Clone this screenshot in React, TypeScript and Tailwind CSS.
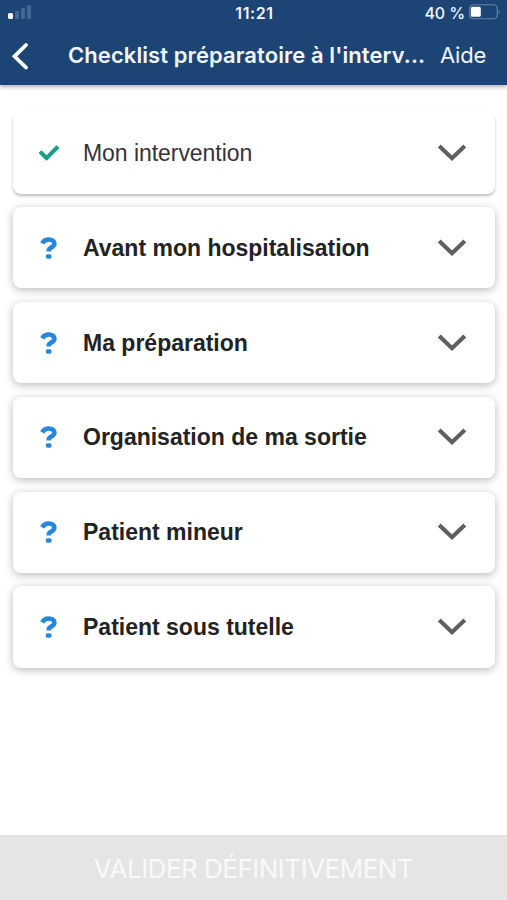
import { FaCheck } from 'react-icons/fa';

interface Section {
  title: string;
  done: boolean;
}

const sections: Section[] = [
  { title: 'Mon intervention', done: true },
  { title: 'Avant mon hospitalisation', done: false },
  { title: 'Ma préparation', done: false },
  { title: 'Organisation de ma sortie', done: false },
  { title: 'Patient mineur', done: false },
  { title: 'Patient sous tutelle', done: false },
];

function StatusBar() {
  return (
    <div className="grid grid-cols-3 items-center h-[25px] pl-2 pr-[6px]">
      <svg width="24" height="15" viewBox="0 0 24 15" fill="#416892" className="-mt-[2px]">
        <rect x="0" y="9" width="5" height="6" rx="1.5" fill="#fff" />
        <rect x="7" y="7" width="4" height="8" rx="1" />
        <rect x="13" y="4" width="4" height="11" rx="1" />
        <rect x="19" y="1" width="4" height="14" rx="1" />
      </svg>
      <span className="text-center text-[16px] font-semibold tracking-[0.6px]">11:21</span>
      <div className="flex items-center justify-end gap-[4px]">
        <span className="text-[16px] font-medium whitespace-nowrap tracking-[-0.1px]">40 %</span>
        <svg width="32" height="16" viewBox="0 0 32 16" fill="none" className="-mt-[2px]">
          <rect x="0.25" y="0.75" width="28" height="14" rx="4" stroke="#6484a8" strokeWidth="1.2" />
          <rect x="1.800" y="2.8" width="10" height="10" rx="1.5" fill="#fff" />
          <path d="M29.700 5.500c1.300.7 1.300 3.800 0 4.500z" fill="#6484a8" />
        </svg>
      </div>
    </div>
  );
}

function QuestionMark() {
  return (
    <svg width="18" height="24" viewBox="0 0 18 24" fill="none">
      <path
        d="M2.200 7.400C3.600 4.800 5.800 3.500 8.600 3.500c3.500 0 5.800 1.700 5.800 4.300 0 3.900-5.700 3.200-5.700 6.900v.9"
        stroke="#2588de"
        strokeWidth="4.600"
      />
      <rect x="5.800" y="18.300" width="5.800" height="4.400" rx="1.700" fill="#2588de" />
    </svg>
  );
}

function SectionCard({ title, done }: Section) {
  return (
    <button
      className={
        done
          ? 'flex items-center w-full h-[81.500px] rounded-[8px] bg-white pr-[28px] text-left shadow-[0_2px_3px_rgba(0,0,0,0.26)]'
          : 'flex items-center w-full h-[81.500px] rounded-[8px] bg-white pr-[28px] text-left shadow-[0_2px_8px_rgba(0,0,0,0.28)]'
      }
    >
      <span className="flex justify-center w-[70px] pl-[2px]">
        {done ? <FaCheck size={20} color="#16a085" /> : <QuestionMark />}
      </span>
      <span
        className={
          done
            ? 'flex-1 pt-[1px] text-[23px] leading-none tracking-[-0.05px] text-[#333436]'
            : 'flex-1 pt-[1px] text-[23px] leading-none font-bold text-[#222324]'
        }
      >
        {title}
      </span>
      <svg width="30" height="20" viewBox="0 0 30 20" fill="none" stroke="#5e5f60" strokeWidth="4.200">
        <path d="M2.200 3 15 15.200 27.800 3" />
      </svg>
    </button>
  );
}

export default function App() {
  return (
    <div className="flex flex-col w-full h-[900px] bg-white overflow-hidden font-['Liberation_Sans',Arial,sans-serif]">
      <header className="shrink-0 h-[85px] bg-[#1c4474] text-[#f1f6fc] shadow-[0_2px_4px_rgba(0,0,0,0.3)] font-['Inter',sans-serif]">
        <StatusBar />
        <div className="flex items-center h-[61px] pl-3">
          <svg width="18" height="28" viewBox="0 0 18 28" fill="none" stroke="#fff" strokeWidth="3.800" strokeLinecap="round">
            <path d="M14 3 2.500 14.300 14 25.500" />
          </svg>
          <h1 className="ml-[38px] w-[358px] whitespace-nowrap text-[22px] font-semibold tracking-[0.08px]">
            Checklist préparatoire à l'interv...
          </h1>
          <span className="ml-[14px] text-[22px] tracking-[-0.2px]">Aide</span>
        </div>
      </header>

      <main className="flex-1 flex flex-col gap-[13.400px] pt-[27px] pl-[13px] pr-[12px]">
        {sections.map((section) => (
          <SectionCard key={section.title} {...section} />
        ))}
      </main>

      <button className="shrink-0 h-[65px] pt-[2px] bg-[#e5e5e5] text-center text-[26px] tracking-[-0.500px] text-[#f9f9f9] font-['Inter',sans-serif]">
        VALIDER DÉFINITIVEMENT
      </button>
    </div>
  );
}
